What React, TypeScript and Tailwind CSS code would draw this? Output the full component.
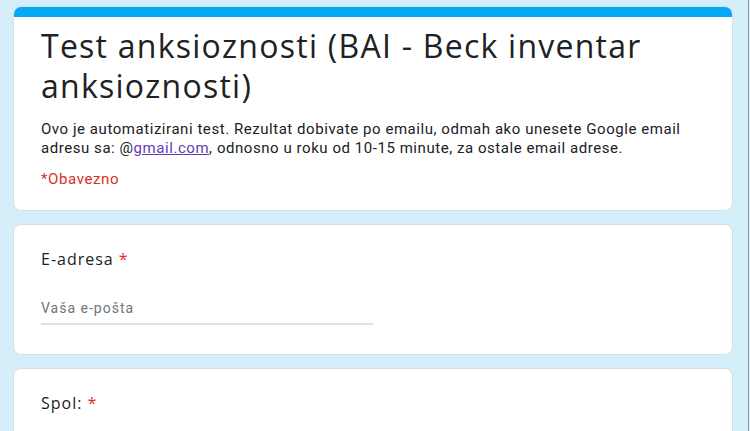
import React from 'react';

const Required = () => <span className="text-[#d93025] ml-[5px]">*</span>;

export default function App() {
  return (
    <div className="h-[431px] w-[750px] overflow-hidden bg-[#d4eff9] font-['Roboto',sans-serif]">
      <div className="h-full w-[749px] border-r border-[#8e9aa0] pl-[13px] pr-[15px] pt-[6px] flex flex-col gap-[13px]">
        {/* Header card */}
        <div className="rounded-lg overflow-hidden bg-white border border-[#dadce0] shrink-0">
          <div className="h-[10px] bg-[#03a9f4]" />
          <div className="px-[27px] pt-[9px] pb-[21px]">
            <h1 className="font-['Open_Sans',sans-serif] text-[32px] leading-[40px] text-[#202124] tracking-[1.25px]">
              Test anksioznosti (BAI - Beck inventar anksioznosti)
            </h1>
            <p className="mt-[14px] text-[15px] leading-[19px] tracking-[0.55px] text-[#202124]">
              Ovo je automatizirani test. Rezultat dobivate po emailu, odmah ako unesete Google email adresu sa:{' '}
              <span className="whitespace-nowrap">
                @<a className="text-[#673ab7] underline">gmail.com</a>,
              </span>{' '}
              odnosno u roku od 10-15 minute, za ostale email adrese.
            </p>
            <div className="mt-[11px] text-[15px] leading-[20px] tracking-[0.6px] text-[#d93025]">*Obavezno</div>
          </div>
        </div>

        {/* Email card */}
        <div className="rounded-lg bg-white border border-[#dadce0] px-[27px] pt-[22px] pb-[29px] shrink-0">
          <div className="font-['Open_Sans',sans-serif] text-[16px] leading-[24px] tracking-[1px] text-[#202124]">
            E-adresa
            <Required />
          </div>
          <div className="mt-[27px] w-[332px] border-b-2 border-[#e0e0e0] pb-[5px] text-[14px] leading-[20px] tracking-[1px] text-[#70757a]">
            Vaša e-pošta
          </div>
        </div>

        {/* Spol card */}
        <div className="rounded-lg bg-white border border-[#dadce0] px-[27px] pt-[22px] pb-[40px] shrink-0">
          <div className="font-['Open_Sans',sans-serif] text-[16px] leading-[24px] tracking-[1px] text-[#202124]">
            Spol:
            <Required />
          </div>
        </div>
      </div>
    </div>
  );
}
